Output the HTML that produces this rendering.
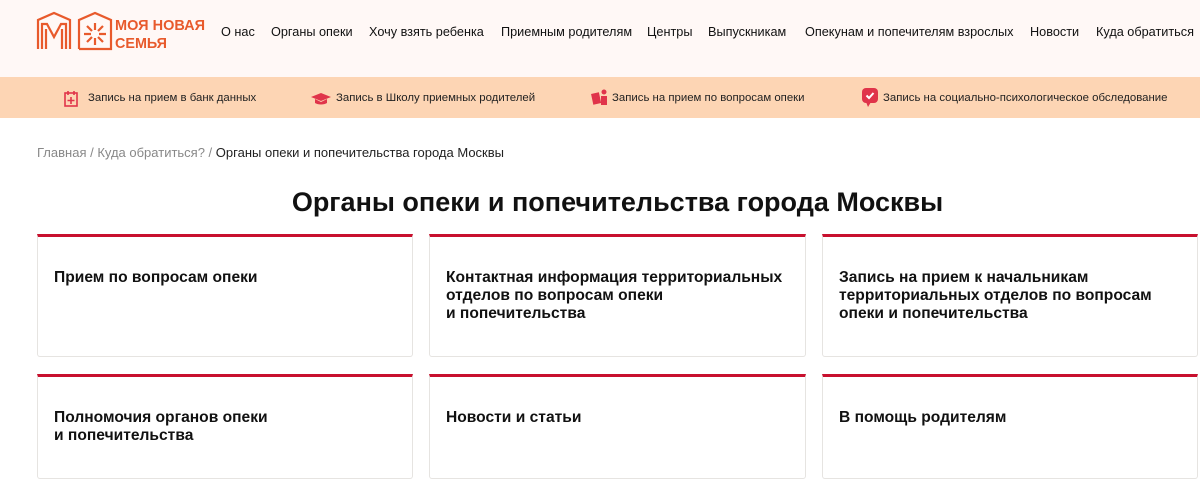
<!DOCTYPE html>
<html><head><meta charset="utf-8"><style>
*{margin:0;padding:0;box-sizing:border-box}
body{width:1200px;height:503px;overflow:hidden;background:#fff;font-family:"Liberation Sans",Arial,sans-serif;color:#111;position:relative}
.hdr{position:absolute;left:0;top:0;width:1200px;height:77px;background:#fff8f6}
.nav{position:absolute;top:25px;font-size:12.7px;color:#111;white-space:nowrap}
.bar{position:absolute;left:0;top:77px;width:1200px;height:41px;background:#fdd5b4}
.bi{position:absolute;top:92px;font-size:11.4px;color:#222;white-space:nowrap}
.crumb{position:absolute;left:37px;top:145px;font-size:13px;color:#888}
.crumb b{font-weight:normal;color:#222}
h1{position:absolute;left:0;width:1235px;text-align:center;top:187px;font-size:27px;font-weight:bold}
.card{position:absolute;border:1px solid #e6e4e1;border-top:3px solid #c8102e;border-radius:0 0 3px 3px;background:#fff;padding:32px 8px 0 16px;font-size:15.6px;font-weight:bold;line-height:18px}
</style></head><body>
<div class="hdr"></div>
<svg style="position:absolute;left:36px;top:11px" width="175" height="40" viewBox="0 0 175 40">
<g fill="none" stroke="#e85a2c" stroke-width="2.2">
<path d="M2 38V9l16-7 16 7v29"/><path d="M6 38V13h5l7 13 7-13h5v25"/><path d="M10 38V18M26 38V18"/>
<path d="M43 38V9l16-7 16 7v29H43"/>
</g>
<g stroke="#e85a2c" stroke-width="2.2">
<path d="M59 12v7M59 27v7M48 23h7M63 23h7M51 15l5 5M62 26l5 5M67 15l-5 5M56 26l-5 5"/>
</g>
<text x="79" y="19" font-family="Liberation Sans" font-weight="bold" font-size="15" fill="#e85a2c" textLength="90" lengthAdjust="spacingAndGlyphs">МОЯ НОВАЯ</text>
<text x="79" y="37" font-family="Liberation Sans" font-weight="bold" font-size="15" fill="#e85a2c" textLength="52" lengthAdjust="spacingAndGlyphs">СЕМЬЯ</text>
</svg>
<div class="nav" style="left:221px">О нас</div>
<div class="nav" style="left:271px">Органы опеки</div>
<div class="nav" style="left:369px">Хочу взять ребенка</div>
<div class="nav" style="left:501px">Приемным родителям</div>
<div class="nav" style="left:647px">Центры</div>
<div class="nav" style="left:708px">Выпускникам</div>
<div class="nav" style="left:805px">Опекунам и попечителям взрослых</div>
<div class="nav" style="left:1030px">Новости</div>
<div class="nav" style="left:1096px">Куда обратиться</div>
<div class="bar"></div>
<svg style="position:absolute;left:64px;top:90px" width="14" height="17"><rect x="1" y="3" width="12" height="13" fill="none" stroke="#e0344a" stroke-width="1.6"/><path d="M4 1v4M10 1v4M7 7v7M3.5 10.5h7" stroke="#e0344a" stroke-width="1.6"/></svg>
<div class="bi" style="left:88px">Запись на прием в банк данных</div>
<svg style="position:absolute;left:311px;top:92px" width="20" height="14"><path d="M0 5l10-4 10 4-10 4z" fill="#e0344a"/><path d="M4 7v4c3 2 9 2 12 0V7l-6 3z" fill="#e0344a"/></svg>
<div class="bi" style="left:336px">Запись в Школу приемных родителей</div>
<svg style="position:absolute;left:591px;top:88px" width="18" height="18"><rect x="1" y="5" width="8" height="11" fill="#e0344a" transform="rotate(-12 5 10)"/><circle cx="13" cy="4" r="2.5" fill="#e0344a"/><rect x="10" y="8" width="6" height="9" fill="#e0344a"/></svg>
<div class="bi" style="left:612px">Запись на прием по вопросам опеки</div>
<svg style="position:absolute;left:862px;top:88px" width="16" height="19"><rect x="0" y="0" width="16" height="15" rx="4" fill="#e0344a"/><path d="M4 14l2 5 3-5z" fill="#e0344a"/><path d="M4.5 7.5l2.5 2.5 4.5-5" fill="none" stroke="#fff" stroke-width="2"/></svg>
<div class="bi" style="left:883px">Запись на социально-психологическое обследование</div>
<div class="crumb">Главная / Куда обратиться? / <b>Органы опеки и попечительства города Москвы</b></div>
<h1>Органы опеки и попечительства города Москвы</h1>
<div class="card" style="left:37px;top:234px;width:376px;height:123px">Прием по вопросам опеки</div>
<div class="card" style="left:429px;top:234px;width:377px;height:123px">Контактная информация территориальных<br>отделов по вопросам опеки<br>и попечительства</div>
<div class="card" style="left:822px;top:234px;width:376px;height:123px">Запись на прием к начальникам<br>территориальных отделов по вопросам<br>опеки и попечительства</div>
<div class="card" style="left:37px;top:374px;width:376px;height:105px">Полномочия органов опеки<br>и попечительства</div>
<div class="card" style="left:429px;top:374px;width:377px;height:105px">Новости и статьи</div>
<div class="card" style="left:822px;top:374px;width:376px;height:105px">В помощь родителям</div>
</body></html>
